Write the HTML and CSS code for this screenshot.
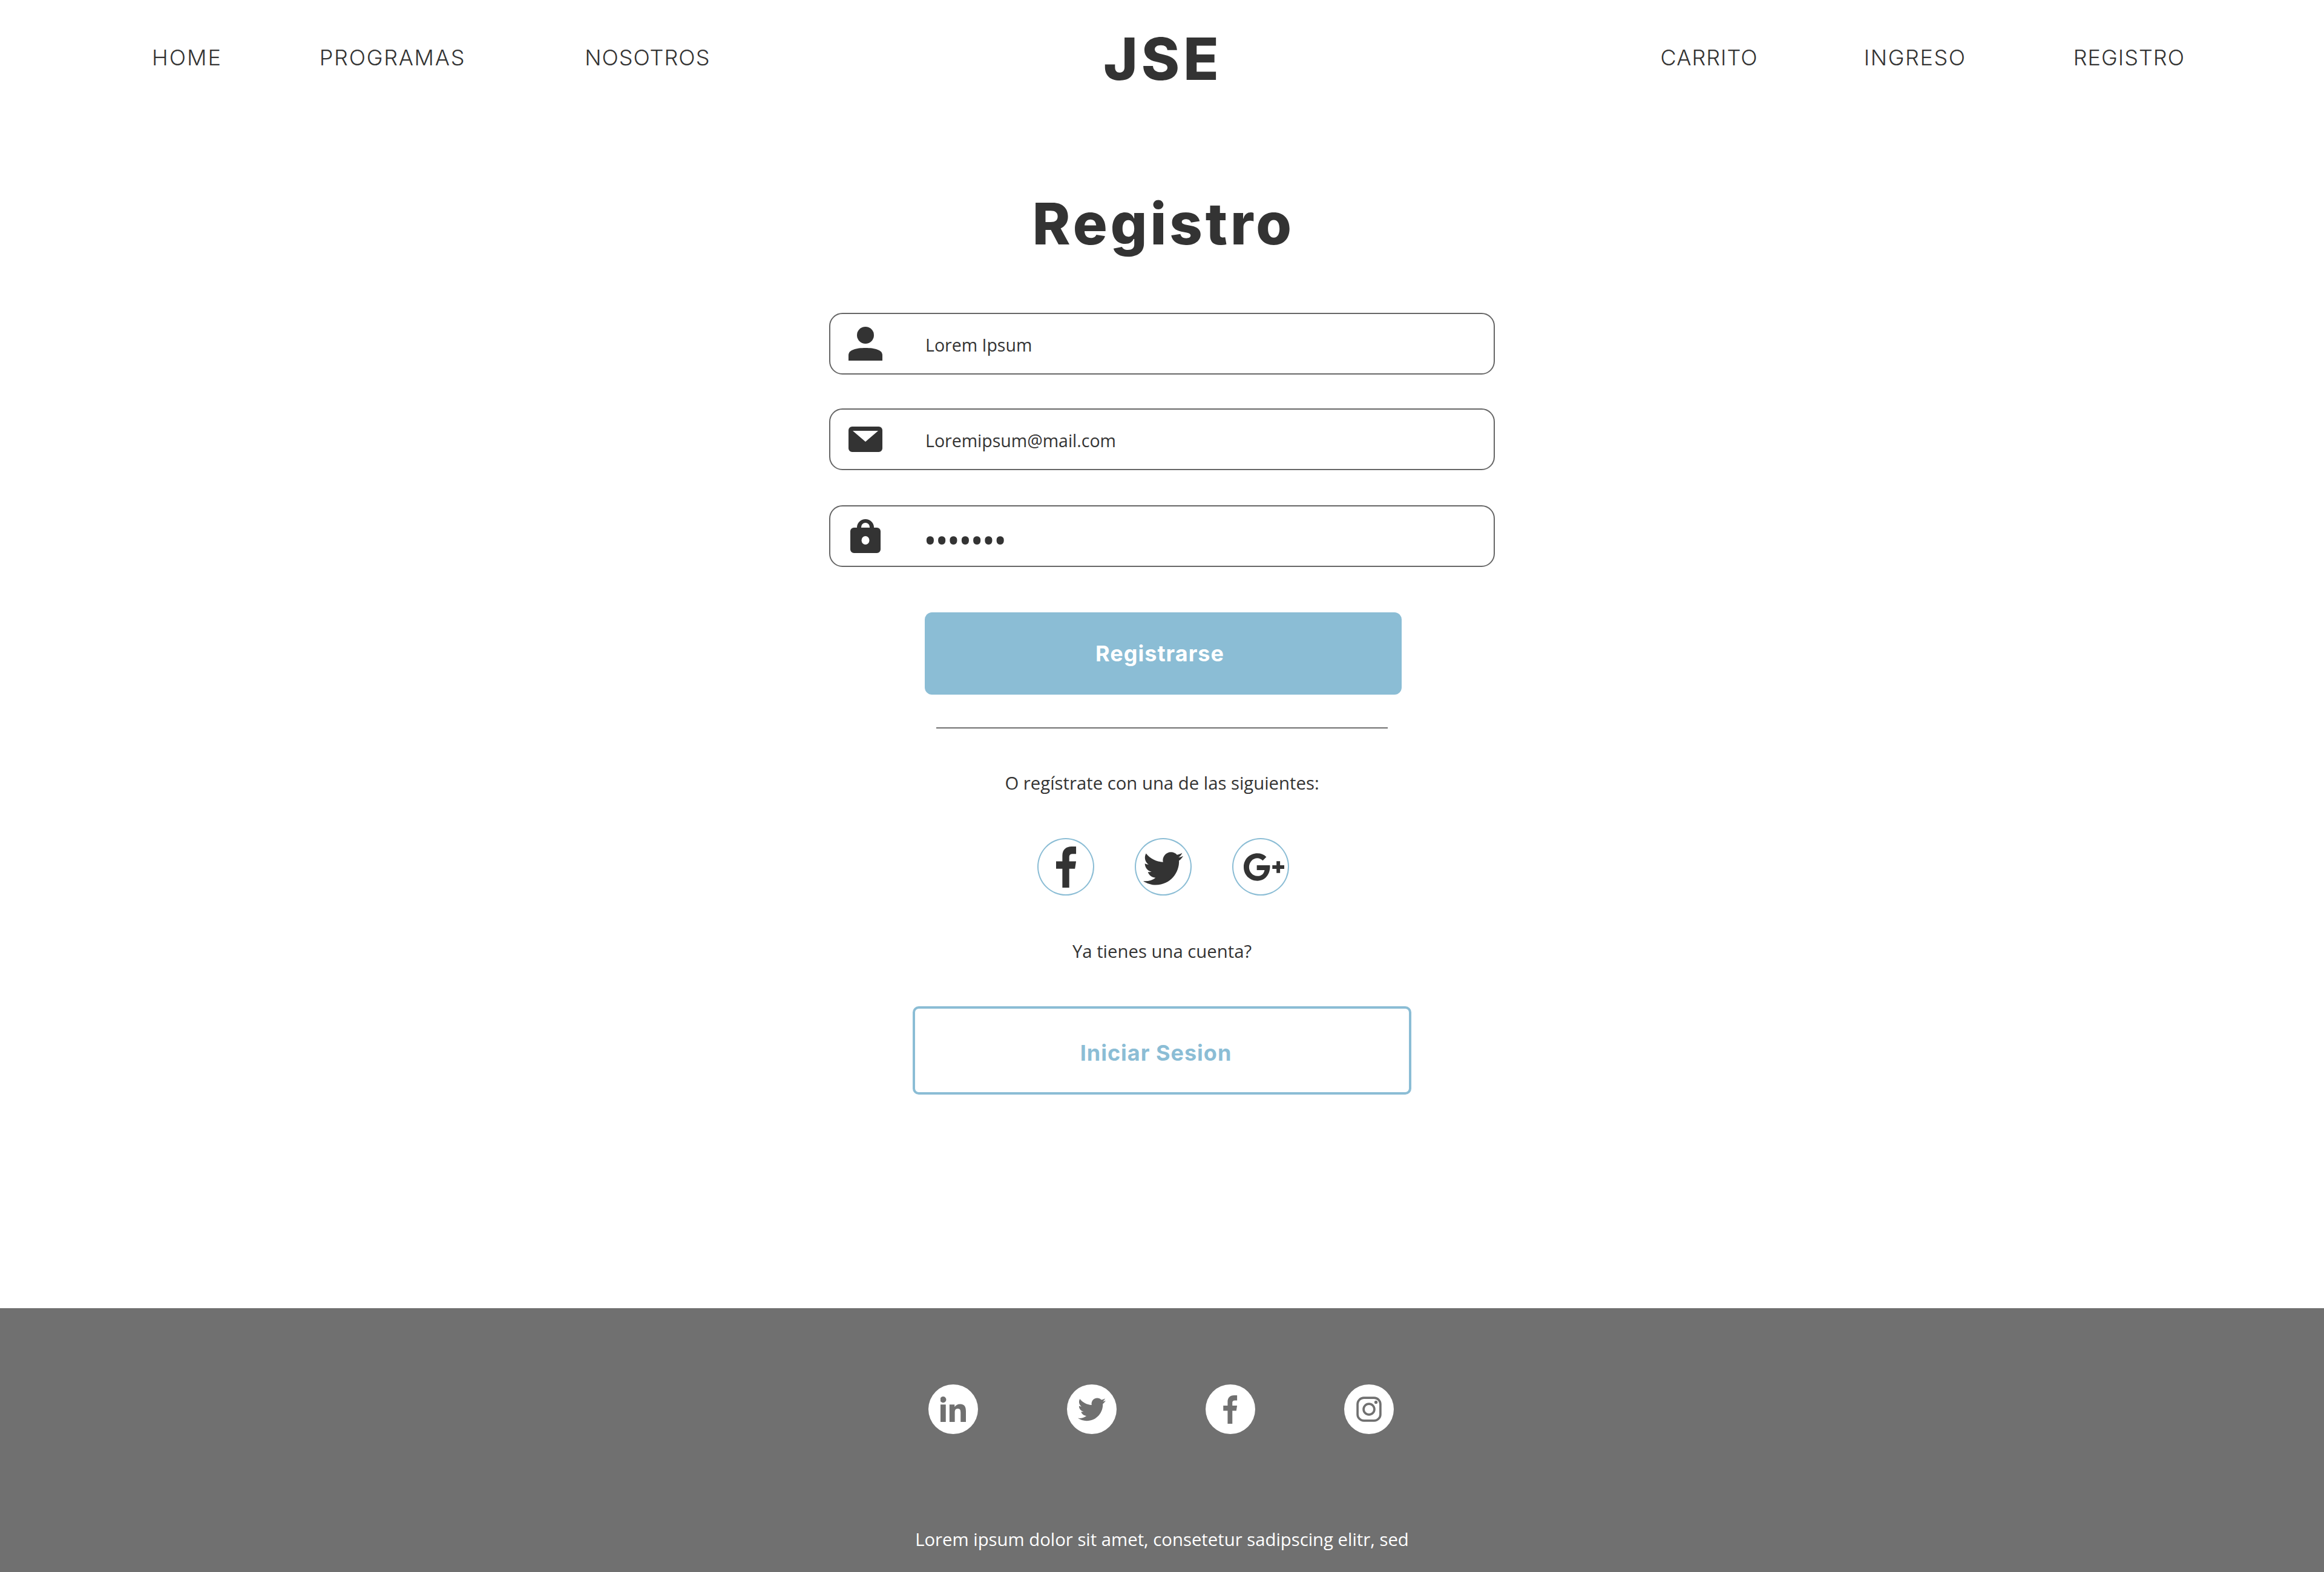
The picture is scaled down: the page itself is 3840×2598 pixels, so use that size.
FILE: index.html
```html
<!DOCTYPE html>
<html>
  <head>
    <title>JSE Registro</title>
    <link rel="stylesheet" href="styles.css">
  </head>
  <body>
    <!-- top navigation -->
    <header class="topbar">
      <nav class="nav nav-left">
        <a class="nav-home">HOME</a>
        <a class="nav-programas">PROGRAMAS</a>
        <a class="nav-nosotros">NOSOTROS</a>
      </nav>
      <div class="logo">JSE</div>
      <nav class="nav nav-right">
        <a class="nav-carrito">CARRITO</a>
        <a class="nav-ingreso">INGRESO</a>
        <a class="nav-registro">REGISTRO</a>
      </nav>
    </header>

    <main class="content">
      <h1 class="title">Registro</h1>

      <div class="field field-name">
        <svg class="field-icon" viewBox="0 0 56 56"><ellipse cx="28" cy="14" rx="14" ry="14"/><path d="M0 56V47C0 38 13 35 28 35S56 38 56 47V56Z"/></svg>
        <span class="field-text">Lorem Ipsum</span>
      </div>
      <div class="field field-mail">
        <svg class="field-icon" viewBox="0 0 56 42"><path fill-rule="evenodd" d="M6 0H50A6 6 0 0 1 56 6V36A6 6 0 0 1 50 42H6A6 6 0 0 1 0 36V6A6 6 0 0 1 6 0ZM7 7L28 25L49 7Z"/></svg>
        <span class="field-text">Loremipsum@mail.com</span>
      </div>
      <div class="field">
        <svg class="field-icon" viewBox="0 0 50 56"><path fill-rule="evenodd" d="M11 14V13.500A14 13.500 0 0 1 39 13.500V14H44A6 6 0 0 1 50 20V50A6 6 0 0 1 44 56H6A6 6 0 0 1 0 50V20A6 6 0 0 1 6 14ZM18 14H32V13A7 7 0 0 0 18 13ZM25 28A6.500 7 0 1 0 25 42A6.500 7 0 1 0 25 28Z"/></svg>
        <span class="field-text field-dots">•••••••</span>
      </div>

      <button class="btn-primary">Registrarse</button>
      <div class="divider"></div>
      <p class="note note-social">O regístrate con una de las siguientes:</p>

      <div class="social">
        <span class="social-circle">
          <svg viewBox="0 0 36 72" class="ic-f"><path d="M11 72V39H0V26H11V16C11 5 18 0 27 0H35V13H29C25 13 23 15 23 18V26H35L33 39H23V72Z"/></svg>
        </span>
        <span class="social-circle">
          <svg viewBox="0 0 24 24" class="ic-tw"><path d="M24 4.600c-.9.400-1.800.7-2.800.8 1-.6 1.800-1.600 2.200-2.700-1 .6-2 1-3.100 1.200-.9-1-2.200-1.600-3.600-1.600-3.200 0-5.500 3-4.800 6C7.800 8.100 4.100 6.100 1.700 3.100.4 5.300 1 8.200 3.200 9.700c-.8 0-1.600-.2-2.200-.6-.1 2.300 1.600 4.500 4 5-.7.200-1.500.2-2.200.1.6 2 2.500 3.400 4.600 3.500C5.300 19.300 2.700 20 0 19.700 2.200 21.100 4.800 22 7.500 22c9.100 0 14.300-7.700 14-14.600 1-.7 1.800-1.600 2.500-2.800z"/></svg>
        </span>
        <span class="social-circle">
          <svg viewBox="0 0 68 46" class="ic-gp"><path d="M23 0C29 0 34 2 38 6L32 12C30 10 26 8 23 8C15 8 9 15 9 23S15 38 23 38C30 38 34 34 35 28H22V20H44C45 35 36 46 23 46C10 46 0 36 0 23S10 0 23 0Z"/><path d="M55 13H61V20H68V26H61V33H55V26H48V20H55Z"/></svg>
        </span>
      </div>

      <p class="note note-account">Ya tienes una cuenta?</p>
      <button class="btn-outline">Iniciar Sesion</button>
    </main>

    <footer class="footer">
      <div class="footer-icons">
        <span class="footer-circle">
          <svg viewBox="0 0 24 24" class="ic-in"><path d="M0 7.500H5V24H0ZM2.500 0A2.900 2.900 0 1 1 2.500 5.800A2.900 2.900 0 1 1 2.500 0ZM8.500 7.500H13.300V9.800C14.200 8.300 16 7.100 18.500 7.100C23 7.100 24 10 24 14V24H19V15C19 13 18.600 11.400 16.300 11.400C14.100 11.400 13.500 13 13.500 15V24H8.500Z"/></svg>
        </span>
        <span class="footer-circle">
          <svg viewBox="0 0 24 24" class="ic-tw-small"><path d="M24 4.600c-.9.400-1.800.7-2.800.8 1-.6 1.800-1.600 2.200-2.700-1 .6-2 1-3.100 1.200-.9-1-2.200-1.600-3.600-1.600-3.200 0-5.500 3-4.800 6C7.800 8.100 4.100 6.100 1.700 3.100.4 5.300 1 8.200 3.200 9.700c-.8 0-1.600-.2-2.200-.6-.1 2.300 1.600 4.500 4 5-.7.200-1.500.2-2.200.1.6 2 2.500 3.400 4.600 3.500C5.300 19.300 2.700 20 0 19.700 2.200 21.100 4.800 22 7.500 22c9.100 0 14.300-7.700 14-14.600 1-.7 1.800-1.600 2.500-2.800z"/></svg>
        </span>
        <span class="footer-circle">
          <svg viewBox="0 0 36 72" class="ic-f-small"><path d="M11 72V39H0V26H11V16C11 5 18 0 27 0H35V13H29C25 13 23 15 23 18V26H35L33 39H23V72Z"/></svg>
        </span>
        <span class="footer-circle">
          <svg viewBox="0 0 40 40" class="ic-ig"><rect x="2" y="2" width="36" height="36" rx="10" fill="none" stroke-width="3.500"/><circle cx="20" cy="20" r="8.500" fill="none" stroke-width="3.500"/><circle cx="31" cy="9" r="2.500" class="ig-dot"/></svg>
        </span>
      </div>
      <p class="footer-text">Lorem ipsum dolor sit amet, consetetur sadipscing elitr, sed</p>
    </footer>
  </body>
</html>
```

FILE: styles.css
```css
html, body {
  margin: 0;
  padding: 0;
  background: #ffffff;
}

body {
  font-family: 'Open Sans', sans-serif;
  color: #333333;
  height: 2598px;
  overflow: hidden;
}

/* top bar */
.topbar {
  height: 190px;
  display: grid;
  grid-template-columns: 1fr auto 1fr;
  align-items: center;
  padding: 0 230px 0 251px;
  box-sizing: border-box;
}

.nav {
  display: flex;
  font-family: 'Inter', sans-serif;
  font-weight: 300;
  font-size: 36px;
}

.nav-right { justify-content: flex-end; }

.nav-home { margin-right: 161px; letter-spacing: 2px; }
.nav-programas { margin-right: 197px; letter-spacing: 1.700px; }
.nav-nosotros { letter-spacing: 1px; }
.nav-carrito { margin-right: 175px; letter-spacing: 1px; }
.nav-ingreso { margin-right: 177px; letter-spacing: 1.600px; }
.nav-registro { letter-spacing: 1px; }

.logo {
  font-family: 'Inter', sans-serif;
  font-weight: 800;
  font-size: 96px;
  letter-spacing: 6px;
  margin-right: 18px;
  padding-top: 3px;
}

/* form */
.content {
  display: flex;
  flex-direction: column;
  align-items: center;
  height: 1972px;
}

.title {
  font-family: 'Inter', sans-serif;
  font-weight: 800;
  font-size: 95px;
  letter-spacing: 5px;
  margin: 120px 0 0 5px;
  line-height: 120px;
  height: 207px;
}

.field {
  width: 1100px;
  height: 102px;
  box-sizing: border-box;
  border: 2px solid #666666;
  border-radius: 22px;
  display: flex;
  align-items: center;
  padding-left: 30px;
}

.field-name { margin-bottom: 56px; }
.field-mail { margin-bottom: 58px; }

.field-icon {
  width: 56px;
  height: 56px;
  fill: #333333;
  margin-right: 71px;
}

.field-text {
  font-size: 28.500px;
  padding-top: 3px;
}

.field-dots {
  font-size: 58px;
  line-height: 1;
  letter-spacing: -2.500px;
  margin-left: -3px;
  padding-top: 14px;
}

.btn-primary {
  width: 788px;
  height: 136px;
  margin: 75px 0 0 4px;
  border: none;
  border-radius: 12px;
  background: #8bbdd5;
  color: #ffffff;
  font-family: 'Inter', sans-serif;
  font-weight: 700;
  font-size: 36px;
  letter-spacing: 1px;
  padding-right: 17px;
}

.divider {
  width: 746px;
  height: 2px;
  background: #707070;
  margin-top: 54px;
}

.note {
  font-size: 29.300px;
  margin: 0;
}

.note-social { margin-top: 70px; }

.social {
  display: flex;
  gap: 67px;
  margin: 71px 0 0 4px;
}

.social-circle {
  width: 94px;
  height: 95px;
  box-sizing: border-box;
  border: 2px solid #8bbdd5;
  border-radius: 50%;
  display: flex;
  align-items: center;
  justify-content: center;
}

.social-circle svg { fill: #333333; }

.ic-f { width: 34px; height: 68px; margin-left: 2px; }
.ic-tw { width: 66px; height: 66px; margin-top: 4px; }
.ic-gp { width: 67px; height: 46px; margin-left: 10px; }

.note-account { margin-top: 72px; }

.btn-outline {
  width: 824px;
  height: 146px;
  margin-top: 71px;
  background: #ffffff;
  border: 4px solid #8bbdd5;
  border-radius: 10px;
  color: #8bbdd5;
  font-family: 'Inter', sans-serif;
  font-weight: 700;
  font-size: 36px;
  letter-spacing: 1px;
  padding: 8px 20px 0 0;
}

/* footer */
.footer {
  height: 436px;
  background: #707070;
  display: flex;
  flex-direction: column;
  align-items: center;
  color: #ffffff;
}

.footer-icons {
  display: flex;
  gap: 147px;
  margin: 126px 3px 0 0;
}

.footer-circle {
  width: 82px;
  height: 82px;
  border-radius: 50%;
  background: #ffffff;
  display: flex;
  align-items: center;
  justify-content: center;
}

.footer-circle svg { fill: #707070; }

.ic-in { width: 42px; height: 42px; }
.ic-tw-small { width: 46px; height: 46px; }
.ic-f-small { width: 24px; height: 47px; }
.ic-ig { width: 42px; height: 42px; stroke: #707070; }
.ig-dot { stroke: none; }

.footer-text {
  font-size: 29.300px;
  margin: 154px 0 0 0;
}
```
